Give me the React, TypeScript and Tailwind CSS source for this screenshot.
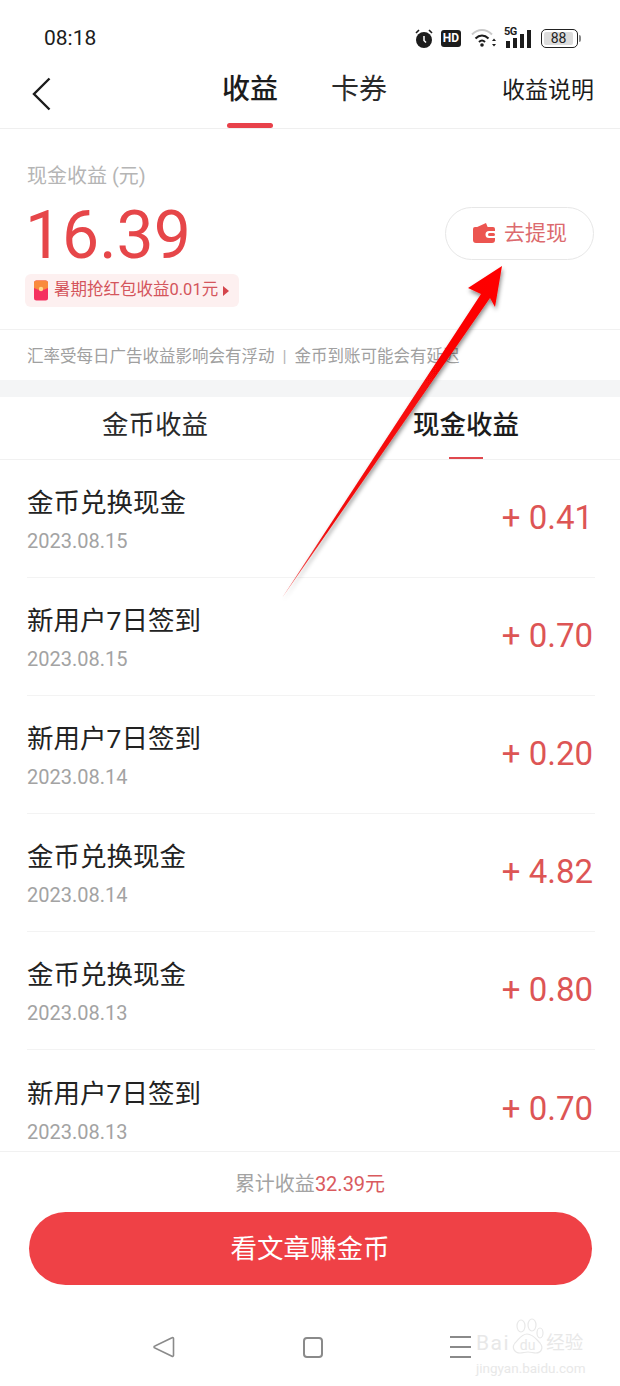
const records = [
  { title: '金币兑换现金', date: '2023.08.15', amount: '+ 0.41' },
  { title: '新用户7日签到', date: '2023.08.15', amount: '+ 0.70' },
  { title: '新用户7日签到', date: '2023.08.14', amount: '+ 0.20' },
  { title: '金币兑换现金', date: '2023.08.14', amount: '+ 4.82' },
  { title: '金币兑换现金', date: '2023.08.13', amount: '+ 0.80' },
  { title: '新用户7日签到', date: '2023.08.13', amount: '+ 0.70' },
];

function StatusIcons() {
  return (
    <div className="flex items-center">
      {/* alarm */}
      <svg width="20" height="21" viewBox="0 0 20 21" className="ml-[414px]">
        <circle cx="10" cy="12" r="8" fill="#1c1c1c" />
        <path d="M10 8v4.5l2 2" stroke="#fff" strokeWidth="1.5" fill="none" />
        <path d="M2 5l3-3M18 5l-3-3" stroke="#1c1c1c" strokeWidth="1.6" />
      </svg>
      {/* HD */}
      <div className="ml-[7px] flex h-[17px] w-[20px] items-center justify-center rounded-[3px] bg-[#1c1c1c] text-[12px] leading-none font-bold text-white">
        HD
      </div>
      {/* wifi */}
      <svg width="26" height="20" viewBox="0 0 26 20" className="ml-[10px]">
        <path d="M1 6.500C7 0.500 15 0.500 21 6.500" stroke="#c9c9c9" strokeWidth="2" fill="none" />
        <path d="M4.500 10.500C8.500 6.500 13.500 6.500 17.500 10.500" stroke="#1c1c1c" strokeWidth="2" fill="none" />
        <path d="M8 14c2-2 4-2 6 0" stroke="#1c1c1c" strokeWidth="2" fill="none" />
        <circle cx="11" cy="17" r="1.800" fill="#1c1c1c" />
        <path d="M23 10.500l2 2.500h-4zM23 18.500l2-2.500h-4z" fill="#1c1c1c" />
      </svg>
      {/* 5G signal */}
      <div className="relative ml-[7px] h-[24px] w-[28px]">
        <span className="absolute top-0 left-0 text-[11px] leading-none font-bold tracking-[-0.5px] text-[#1c1c1c]">5G</span>
        <div className="absolute bottom-[2px] left-[2px] flex items-end gap-[3px]">
          <div className="h-[7px] w-[4px] bg-[#1c1c1c]" />
          <div className="h-[10px] w-[4px] bg-[#1c1c1c]" />
          <div className="h-[14px] w-[4px] bg-[#1c1c1c]" />
          <div className="h-[18px] w-[4px] bg-[#1c1c1c]" />
        </div>
      </div>
      {/* battery */}
      <div className="ml-[9px] flex items-center">
        <div className="flex h-[19px] w-[37px] items-center rounded-[5px] border border-[#222] p-[2px]">
          <div className="flex h-full w-[29px] items-center justify-center rounded-[2px] bg-[#dcdcdc] text-[14px] leading-none text-[#222]">
            88
          </div>
        </div>
        <div className="ml-[1px] h-[7px] w-[2px] rounded-r-sm bg-[#888]" />
      </div>
    </div>
  );
}

export default function App() {
  return (
    <div
      className="relative flex h-[1386px] w-[620px] flex-col overflow-hidden bg-white text-[#1c1c1c]"
      style={{ fontFamily: 'Roboto, "Noto Sans CJK SC", sans-serif' }}
    >
      {/* status bar */}
      <div className="relative flex h-[64px] items-center pt-[12px]">
        <span className="absolute left-[44px] text-[21px] leading-none">08:18</span>
        <StatusIcons />
      </div>

      {/* nav */}
      <div className="relative flex h-[65px] items-start border-b border-[#efefef]">
        <svg width="20" height="34" viewBox="0 0 20 34" className="absolute top-[13px] left-[32px]">
          <path d="M17.500 1.500L2 17l15.500 15.500" stroke="#1c1c1c" strokeWidth="2.400" fill="none" />
        </svg>
        <div className="ml-[222px] mt-[2px] flex flex-col items-center">
          <span className="text-[28px] leading-[48px] font-medium">收益</span>
          <div className="mt-[9px] h-[5px] w-[46px] rounded-full bg-[#e8414a]" />
        </div>
        <span className="ml-[53px] mt-[2px] text-[28px] leading-[48px] text-[#2a2a2a]">卡券</span>
        <span className="ml-auto mt-[3px] pr-[26px] text-[23px] leading-[48px] whitespace-nowrap">收益说明</span>
      </div>

      {/* summary */}
      <div className="flex h-[201px] flex-col border-b border-[#f1f1f1] px-[27px] pt-[32px]">
        <span className="text-[20px] leading-[30px] text-[#b5b5b5]">现金收益 (元)</span>
        <div className="flex items-start justify-between">
          <div className="flex flex-col items-start">
            <span className="mt-[11px] ml-[-2px] text-[66px] leading-[68px] text-[#e64649]">16.39</span>
            <div className="mt-[4px] ml-[-2px] flex h-[33px] items-center rounded-[6px] bg-[#fdf0f0] pr-[10px] pl-[8px]">
              <svg width="16" height="21" viewBox="0 0 16 21">
                <rect x="1" y="0.500" width="14" height="20" rx="2.500" fill="#f5305f" />
                <path d="M1 3a2.500 2.500 0 012.500-2.500h9A2.500 2.500 0 0115 3v5q-7 4-14 0z" fill="#f98a3c" />
                <circle cx="8" cy="9" r="2.200" fill="#ffd98a" />
              </svg>
              <span className="ml-[5px] text-[16.500px] leading-none whitespace-nowrap text-[#d4555c]">暑期抢红包收益0.01元</span>
              <div className="ml-[5px] h-0 w-0 border-y-[5px] border-l-[6px] border-y-transparent border-l-[#d4454c]" />
            </div>
          </div>
          <div className="mt-[16px] mr-[-1px] flex h-[53px] w-[149px] items-center justify-center rounded-full border border-[#e7e7e7]">
            <svg width="24" height="25" viewBox="0 0 24 25">
              <path d="M3 7l11-5 2 5z" fill="#ec5550" />
              <path d="M3 6h18a2 2 0 012 2v2h-6a3.500 3.500 0 000 7h6v2a3 3 0 01-3 3H4a3 3 0 01-3-3V8a2 2 0 012-2z" fill="#ec5550" />
              <rect x="16" y="12" width="7" height="3" rx="1.500" fill="#ec5550" />
            </svg>
            <span className="ml-[8px] text-[21px] leading-none text-[#dc6a6e]">去提现</span>
          </div>
        </div>
      </div>

      {/* note */}
      <div className="flex h-[50px] items-center px-[27px] pt-[4px] text-[16.500px] whitespace-nowrap text-[#a0a0a0]">
        汇率受每日广告收益影响会有浮动
        <span className="mx-[8px] text-[#b5b5b5]">|</span>
        金币到账可能会有延迟
      </div>
      <div className="h-[17px] bg-[#f4f5f6]" />

      {/* tabs */}
      <div className="flex h-[63px] border-b border-[#f1f1f1]">
        <div className="flex w-[310px] justify-center pt-[9px]">
          <span className="text-[26.500px] leading-[38px] text-[#2a2a2a]">金币收益</span>
        </div>
        <div className="flex flex-1 flex-col items-center pt-[9px] pl-[2px]">
          <span className="text-[26.500px] leading-[38px] font-medium">现金收益</span>
          <div className="mt-[13px] h-[3px] w-[34px] bg-[#e0484e]" />
        </div>
      </div>

      {/* records */}
      <div className="h-[691px] pr-[25px] pl-[27px]">
        {records.map((item, i) => (
          <div
            key={i}
            className="flex h-[118px] items-center justify-between border-b border-[#f3f3f3] last:border-b-0"
          >
            <div className="flex flex-col pt-[2px]">
              <span className="text-[26.500px] leading-[40px] text-[#222]">{item.title}</span>
              <span className="mt-[3px] text-[20px] leading-[30px] text-[#a3a3a3]">{item.date}</span>
            </div>
            <span className="mb-[2px] pr-[2px] text-[33px] leading-none text-[#dd5555]">{item.amount}</span>
          </div>
        ))}
      </div>

      {/* footer */}
      <div className="flex flex-1 flex-col items-center border-t border-[#f1f1f1]">
        <div className="mt-[17px] text-[20px] leading-[30px] text-[#a3a3a3]">
          累计收益<span className="text-[#d95a5e]">32.39元</span>
        </div>
        <div className="mt-[13px] flex h-[73px] w-[563px] items-center justify-center rounded-full bg-[#ef4146] text-[26.500px] text-white">
          看文章赚金币
        </div>
        <div className="mt-[51px] flex w-full items-center">
          <svg width="22" height="22" viewBox="0 0 22 22" className="ml-[153px]">
            <path d="M20.500 2.500v17a1 1 0 01-1.500.8L2 12a1 1 0 010-2L19 1.700a1 1 0 011.500.8z" stroke="#8a8a8a" strokeWidth="1.600" fill="none" />
          </svg>
          <div className="ml-[128px] h-[21px] w-[20px] rounded-[4px] border-2 border-[#8a8a8a]" />
          <div className="ml-[127px] flex h-[22px] w-[21px] flex-col justify-between">
            <div className="h-[2px] bg-[#8a8a8a]" />
            <div className="h-[2px] bg-[#8a8a8a]" />
            <div className="h-[2px] bg-[#8a8a8a]" />
          </div>
        </div>
      </div>

      {/* baidu watermark */}
      <div className="absolute top-[1318px] left-[476px] flex w-[110px] flex-col text-[#e8e8e8]">
        <div className="flex h-[36px] items-end">
          <span className="text-[21px] leading-[21px] tracking-[1.500px]">Bai</span>
          <div className="relative ml-[1px] flex h-[36px] w-[33px] items-end justify-center">
            <svg width="33" height="36" viewBox="0 0 33 36" className="absolute top-0 left-0">
              <g stroke="#e8e8e8" strokeWidth="1.200" fill="none">
                <ellipse cx="10" cy="8" rx="4" ry="6" />
                <ellipse cx="21" cy="7" rx="4" ry="6" />
                <ellipse cx="29" cy="15" rx="3" ry="5" />
                <path d="M16 16c-5 0-8 5-12 9-4 5 0 10 5 10 3 0 5-1 8-1s5 1 8 1c5 0 8-5 4-10-4-4-7-9-13-9z" />
              </g>
            </svg>
            <span className="relative text-[14px] leading-[18px]">du</span>
          </div>
          <span className="ml-[2px] text-[18.500px] leading-[21px]">经验</span>
        </div>
        <span className="mt-[8px] text-[13.500px] leading-none whitespace-nowrap">jingyan.baidu.com</span>
      </div>

      {/* red annotation arrow */}
      <svg width="620" height="1386" viewBox="0 0 620 1386" className="absolute top-0 left-0">
        <defs>
          <linearGradient id="arrowFill" gradientUnits="userSpaceOnUse" x1="282" y1="598" x2="502" y2="266">
            <stop offset="0" stopColor="#f07070" />
            <stop offset="0.2" stopColor="#f01010" />
            <stop offset="1" stopColor="#ff0000" />
          </linearGradient>
          <filter id="arrowShadow" x="-20%" y="-20%" width="140%" height="140%">
            <feDropShadow dx="1" dy="3" stdDeviation="2" floodColor="#000" floodOpacity="0.45" />
          </filter>
        </defs>
        <path
          d="M282 598L481 294 468 288 502 266 495 307 490 298Z"
          fill="url(#arrowFill)"
          filter="url(#arrowShadow)"
        />
      </svg>
    </div>
  );
}
